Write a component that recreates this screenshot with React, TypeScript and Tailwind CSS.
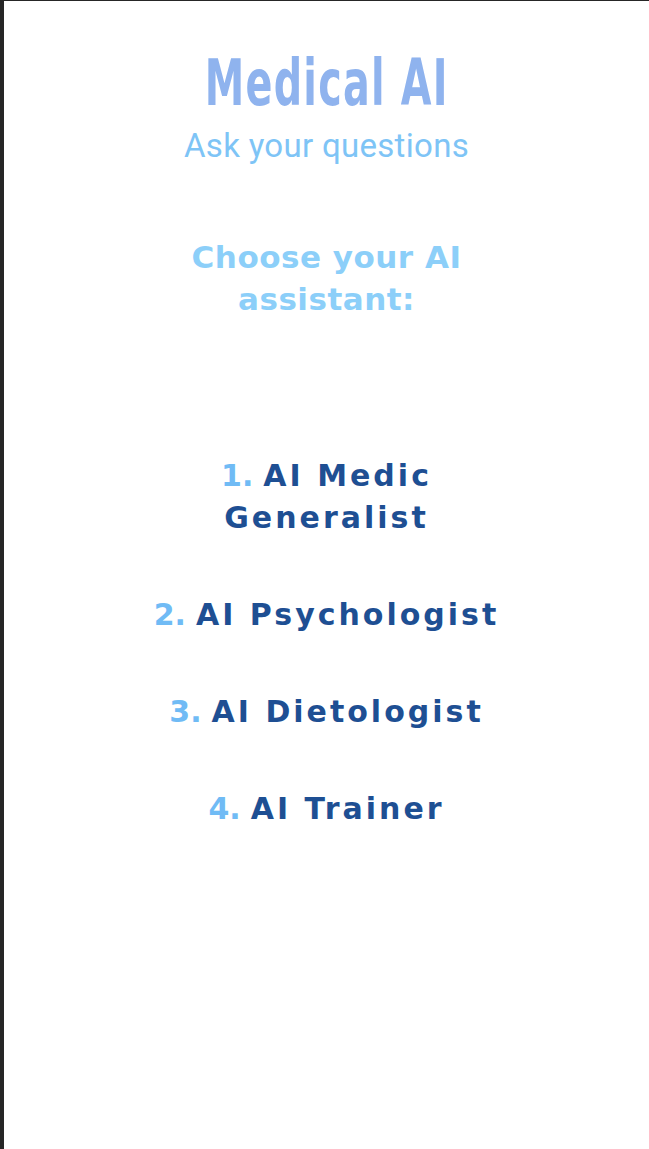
export default function App() {
  const items = [
    { n: "1.", label: "AI Medic Generalist" },
    { n: "2.", label: "AI Psychologist" },
    { n: "3.", label: "AI Dietologist" },
    { n: "4.", label: "AI Trainer" },
  ];

  return (
    <div className="min-h-[1149px] w-full bg-white border-l-4 border-t border-[#262626] flex flex-col items-center">
      <h1 className="mt-[47px] scale-x-[0.62] font-['DejaVu_Sans',sans-serif] font-bold text-[64px] leading-[70px] tracking-[2px] text-[#8fb3ee]">
        Medical AI
      </h1>
      <p className="mt-[8px] font-['Roboto',sans-serif] font-normal text-[33px] leading-[40px] tracking-[0.3px] text-[#7ec4f6]">
        Ask your questions
      </p>

      <h2 className="mt-[70px] w-[320px] text-center font-['DejaVu_Sans',sans-serif] font-bold text-[31px] leading-[42px] tracking-[0.5px] text-[#8ccff9]">
        Choose your AI assistant:
      </h2>

      <ul className="mt-[135px] w-[390px] flex flex-col gap-[55px] text-center font-['DejaVu_Sans',sans-serif] font-bold text-[30px] leading-[42px] tracking-[3px]">
        {items.map((it) => (
          <li key={it.n}>
            <span className="text-[#70bbf5] tracking-[0px] mr-[10px]">{it.n}</span>
            <span className="text-[#1e4f93]">{it.label}</span>
          </li>
        ))}
      </ul>
    </div>
  );
}
